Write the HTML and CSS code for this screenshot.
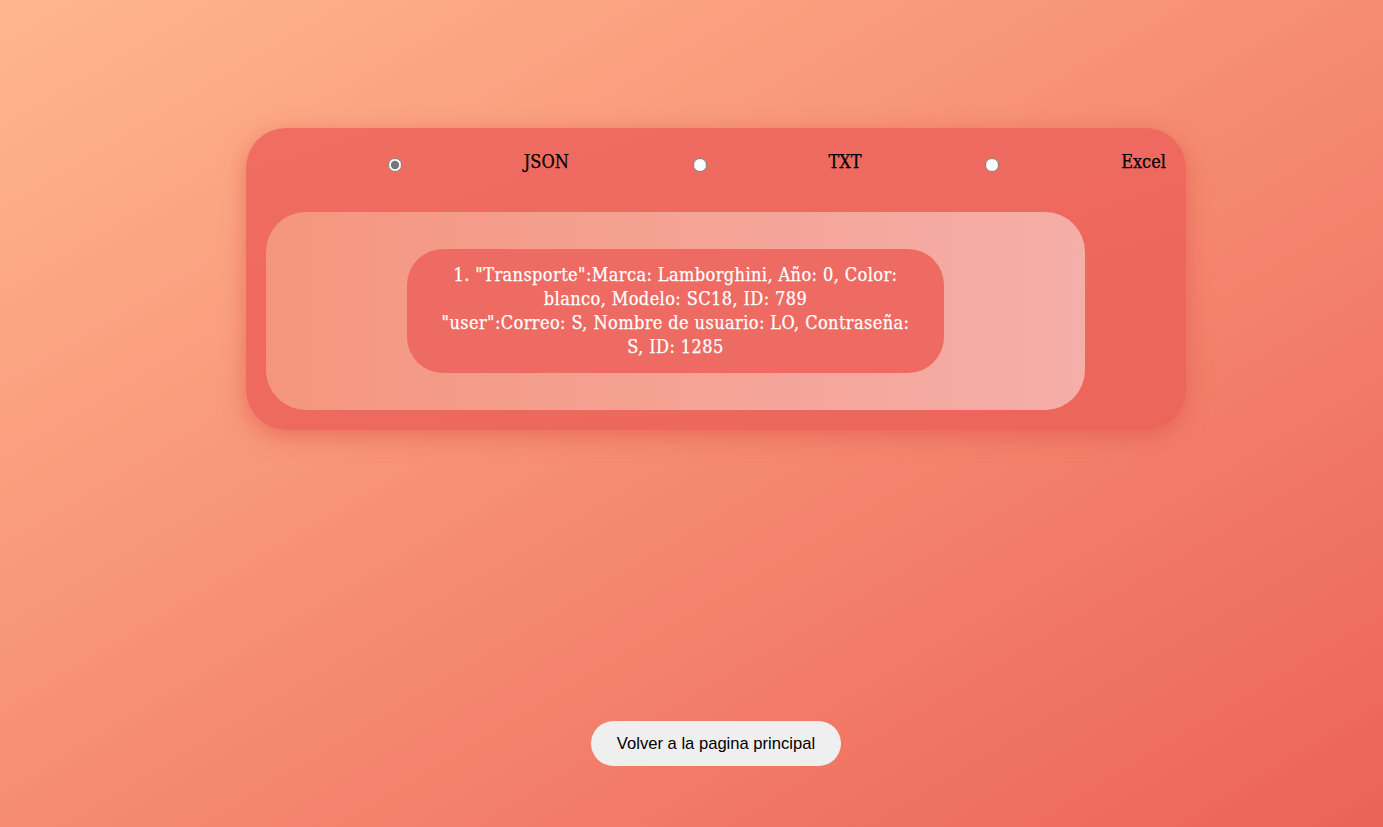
FILE: index.html
```html
<!DOCTYPE html>
<html lang="es">
<head>
<meta charset="utf-8">
<title>Exportar</title>
<link rel="stylesheet" href="styles.css">
</head>
<body>
<div class="page">
  <div class="card">
    <div class="options">
      <input type="radio" name="fmt" class="radio" checked>
      <label class="opt">JSON</label>
      <input type="radio" name="fmt" class="radio">
      <label class="opt">TXT</label>
      <input type="radio" name="fmt" class="radio">
      <label class="opt">Excel</label>
    </div>
    <div class="panel">
      <div class="result">1. "Transporte":Marca: Lamborghini, Año: 0, Color: blanco, Modelo: SC18, ID: 789<br>"user":Correo: S, Nombre de usuario: LO, Contraseña: S, ID: 1285</div>
    </div>
  </div>
  <button class="back">Volver a la pagina principal</button>
</div>
</body>
</html>
```
FILE: styles.css
```css
html, body {
  margin: 0;
  height: 100%;
}
body {
  background: linear-gradient(to bottom right, #ffb68e, #ec6357);
  font-family: "DejaVu Serif Condensed", "DejaVu Serif", serif;
  font-stretch: condensed;
}
.page {
  display: flex;
  flex-direction: column;
  align-items: center;
  padding: 128px 0 0 49px;
}
.card {
  width: 940px;
  box-sizing: border-box;
  padding: 20px;
  background: linear-gradient(to bottom right, #f06d62, #ec655b);
  border-radius: 40px;
  box-shadow: 0 6px 22px rgba(220, 80, 70, 0.55);
}
.options {
  display: flex;
  justify-content: space-between;
  align-items: center;
  padding-left: 117px;
  height: 28px;
  font-size: 18px;
  color: #000;
  -webkit-text-stroke: 0.25px #000;
}
.radio {
  width: 14px;
  height: 14px;
  margin: 6px 3px 0 5px;
  accent-color: #767676;
}
.opt {
  line-height: 28px;
}
.panel {
  margin-top: 36px;
  width: 819px;
  box-sizing: border-box;
  padding: 37px 0;
  border-radius: 40px;
  background: linear-gradient(to right, #f4967f, #f5aea8);
  display: flex;
  justify-content: center;
}
.result {
  width: 537px;
  box-sizing: border-box;
  padding: 14px 30px;
  background: #ee6b63;
  border-radius: 36px;
  color: #fff;
  font-size: 18px;
  line-height: 24px;
  letter-spacing: 0.4px;
  text-align: center;
  -webkit-text-stroke: 0.25px #fff;
}
.back {
  margin-top: 291px;
  width: 250px;
  height: 45px;
  border: none;
  border-radius: 23px;
  background: #efefef;
  color: #000;
  font-family: "Liberation Sans", Arial, sans-serif;
  font-size: 16.6px;
  cursor: pointer;
}
```
